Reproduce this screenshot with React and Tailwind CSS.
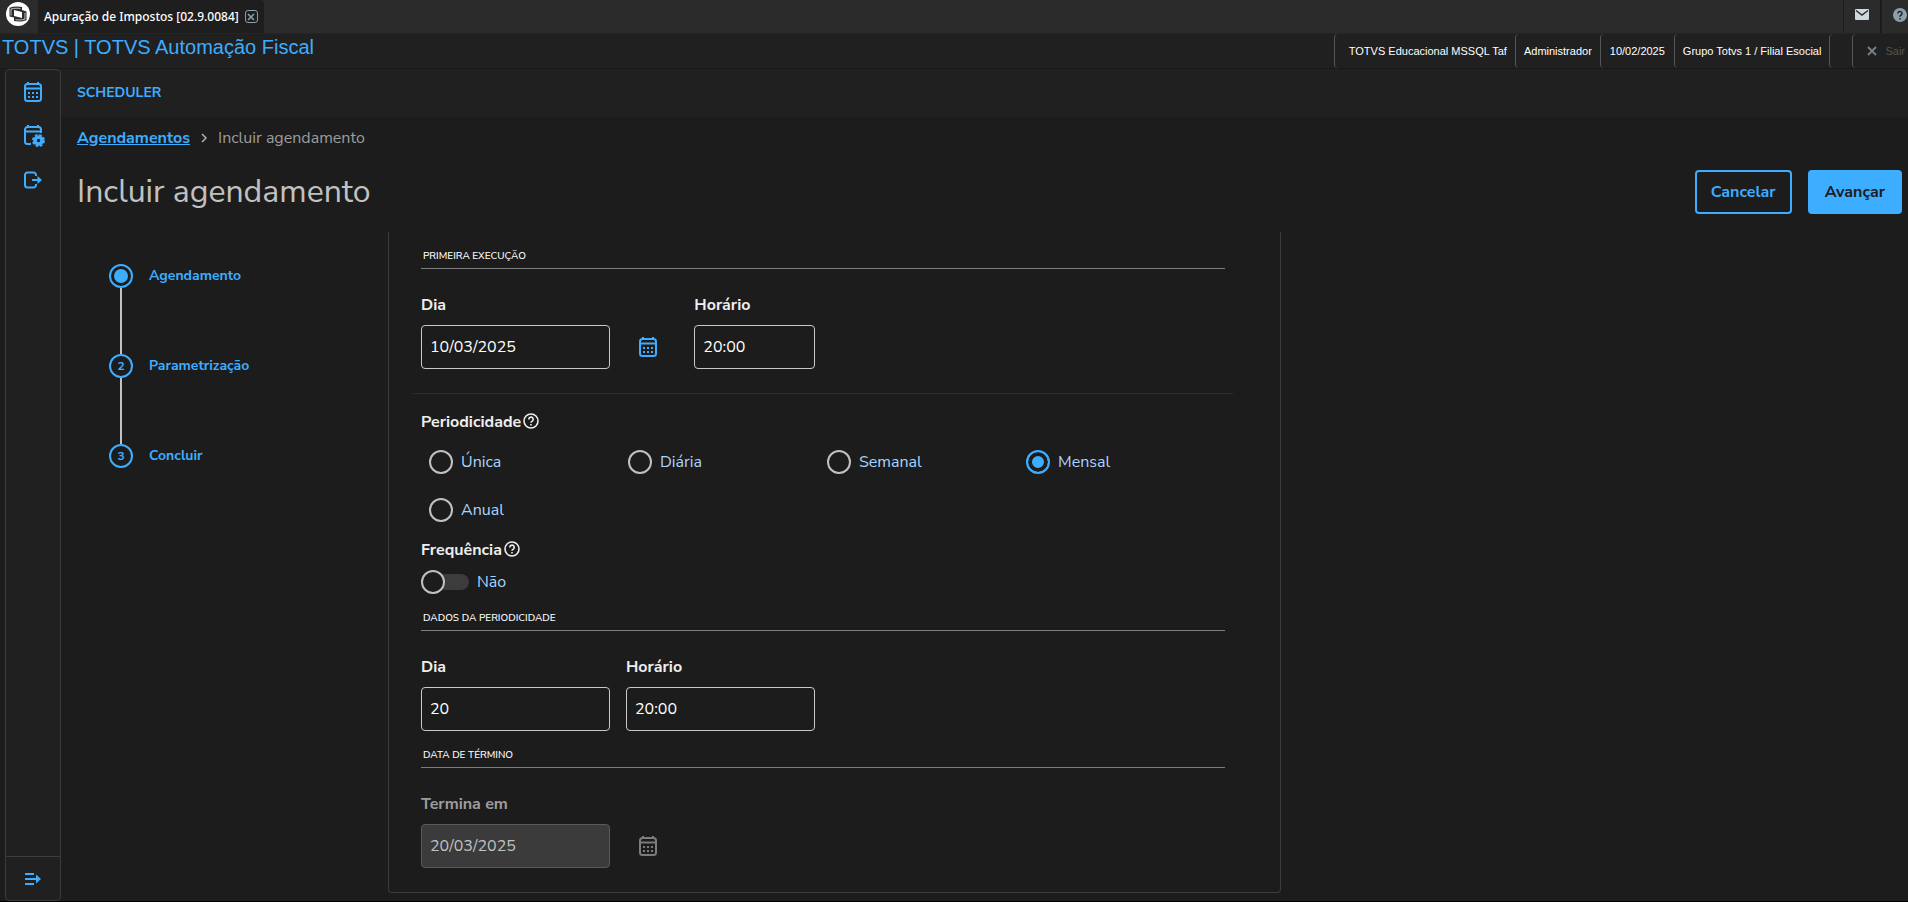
import React, { useState } from 'react';

const CalendarIcon = () => (
  <svg viewBox="0 0 20 22" fill="none" stroke="currentColor" strokeWidth="2" className="w-5 h-[22px]" aria-hidden="true">
    <rect x="2" y="3" width="16" height="17" rx="2.5" />
    <path d="M2 7.5h16M5 1v2M15 1v2" />
    <path d="M5 12h2M9 12h2M13 12h2M5 16h2M9 16h2M13 16h2" />
  </svg>
);

const CalendarGearIcon = () => (
  <svg viewBox="0 0 22 24" fill="none" stroke="currentColor" strokeWidth="2" className="w-[22px] h-6" aria-hidden="true">
    <path d="M8 20H4.500a2.500 2.500 0 0 1-2.500-2.500v-12A2.500 2.500 0 0 1 4.500 3h11A2.500 2.500 0 0 1 18 5.500V9" />
    <path d="M2 7.500h16M5 1v2M15 1v2" />
    <circle cx="15.500" cy="16.500" r="3.500" strokeWidth="3.600" />
    <circle cx="15.500" cy="16.500" r="5.600" strokeWidth="1.800" strokeDasharray="2.700 1.700" />
  </svg>
);

const ExitIcon = () => (
  <svg viewBox="0 0 20 18" fill="none" stroke="currentColor" strokeWidth="2" className="w-5 h-[18px]" aria-hidden="true">
    <path d="M13 5V4a2.500 2.500 0 0 0-2.500-2.500h-6A2.500 2.500 0 0 0 2 4v10a2.500 2.500 0 0 0 2.500 2.500h6A2.500 2.500 0 0 0 13 14v-1" />
    <path d="M9 9h8" />
    <path d="M14.500 5l4.500 4-4.500 4z" fill="currentColor" stroke="none" />
  </svg>
);

const ExpandIcon = () => (
  <svg viewBox="0 0 18 14" fill="none" stroke="currentColor" strokeWidth="2" className="w-[18px] h-[14px]" aria-hidden="true">
    <path d="M1 2h9M1 7h14M1 12h9" />
    <path d="M12 2.500l5 4.500-5 4.500z" fill="currentColor" stroke="none" />
  </svg>
);

const HelpIcon = () => (
  <svg viewBox="0 0 16 16" fill="none" stroke="currentColor" strokeWidth="1.600" className="mb-[3px] size-4" aria-hidden="true">
    <circle cx="8" cy="8" r="7" />
    <path d="M5.800 6.500a2.200 2.200 0 1 1 3.500 1.600c-.8.500-1.300.8-1.300 1.600" />
    <path d="M8 11v1.500" />
  </svg>
);

const Logo = () => (
  <svg viewBox="0 0 24 24" className="size-6" aria-hidden="true">
    <circle cx="12" cy="12" r="12" fill="#fff" />
    <path d="M3.500 5.800c4-1.500 8-1.600 12.500-.8v3l4.500 1.600v8.600c-4 1.500-8.500 1.600-12.500.8v-3.600l-4.500-1z" fill="#2b2b2b" />
    <path d="M8 8l8 2v6l-8-2z" fill="#fff" />
    <path d="M14.500 6.600c-3-.6-6-.5-9.500.4v6.600" fill="none" stroke="#fff" strokeWidth="0.7" />
    <path d="M9.500 17.600c3 .6 6 .5 9.500-.4v-6.400" fill="none" stroke="#fff" strokeWidth="0.7" />
  </svg>
);

const steps = ['Agendamento', 'Parametrização', 'Concluir'];
const periods = ['Única', 'Diária', 'Semanal', 'Mensal', 'Anual'];

const SectionTitle = ({ children }) => (
  <h2 className="border-b border-[#7c7c7c] px-[2px] pb-1 text-[10px] leading-4 font-medium uppercase text-white">{children}</h2>
);

const Field = ({ id, label, value, onChange, disabled, className }) => (
  <div className={className}>
    <label
      htmlFor={id}
      className={disabled ? 'block mb-2 font-bold leading-6 text-[#9c9c9c]' : 'block mb-2 font-bold leading-6 text-[#eeeeee]'}
    >
      {label}
    </label>
    <input
      id={id}
      type="text"
      value={value}
      onChange={onChange}
      disabled={disabled}
      className="block w-full rounded border border-[#c9c9c9] px-2 py-[9px] leading-6 text-white disabled:border-[#5a5a5a] disabled:bg-[#3b3b3b] disabled:text-[#c1c1c1]"
    />
  </div>
);

const App = () => {
  const [form, setForm] = useState({
    startDate: '10/03/2025',
    startTime: '20:00',
    period: 'Mensal',
    frequency: false,
    day: '20',
    time: '20:00',
  });

  const update = (name) => (e) => setForm({ ...form, [name]: e.target.value });

  return (
    <div className="flex min-h-screen flex-col bg-[#1c1c1c] font-['Nunito_Sans','Nunito','Lato',sans-serif] text-base text-[#eeeeee]">
      <div className="flex h-[33px] shrink-0 items-stretch bg-[#2b2b2b]">
        <div className="flex w-[38px] items-start justify-center pt-[2px] pr-[2px]">
          <Logo />
        </div>
        <div className="flex items-center gap-[6px] rounded-tr bg-[#1e1e1e] px-[6px] font-['Noto_Sans',sans-serif] text-xs font-medium text-white">
          <span>Apuração de Impostos [02.9.0084]</span>
          <button aria-label="Fechar" className="flex size-[13px] items-center justify-center rounded-[3px] border border-[#8ba0ab] text-[#8ba0ab]">
            <svg viewBox="0 0 8 8" stroke="currentColor" strokeWidth="1.6" className="size-2"><path d="M1 1l6 6M7 1L1 7" /></svg>
          </button>
        </div>
        <div className="ml-auto flex">
          <button aria-label="Mensagens" className="flex w-[38px] items-center justify-center border-x border-[#1c1c1c] pb-1">
            <svg viewBox="0 0 14 11" className="w-[14px] h-[11px]">
              <rect width="14" height="11" rx="1" fill="#cfd8dc" />
              <path d="M1 1.500l6 4.500 6-4.500" fill="none" stroke="#2b2b2b" strokeWidth="1.400" />
            </svg>
          </button>
          <button aria-label="Ajuda" className="flex w-[27px] items-center justify-end border-l border-[#1c1c1c] pb-1 pr-px">
            <svg viewBox="0 0 14 14" className="size-[14px]">
              <circle cx="7" cy="7" r="7" fill="#8ba0ab" />
              <path d="M5 5.500a2 2 0 1 1 3.200 1.500C7.400 7.500 7 7.800 7 8.700M7 9.900v1.500" fill="none" stroke="#222" strokeWidth="1.500" />
            </svg>
          </button>
        </div>
      </div>

      <header className="flex h-9 shrink-0 items-stretch justify-between border-y border-t-[#252525] border-b-[#191919] bg-[#202020] font-['Liberation_Sans',Arial,sans-serif]">
        <h1 className="pl-[2px] pt-px text-xl leading-6 text-[#3dadff]">TOTVS | TOTVS Automação Fiscal</h1>
        <div className="flex items-stretch text-[11px] text-white">
          <span className="flex items-center rounded-l border-l border-[#555555] pl-[14px] pr-2">TOTVS Educacional MSSQL Taf</span>
          <span className="flex items-center rounded-l border-l border-[#555555] px-2">Administrador</span>
          <span className="flex items-center rounded-l border-l border-[#555555] px-[9px]">10/02/2025</span>
          <span className="flex items-center rounded-l border-l border-[#555555] px-2">Grupo Totvs 1 / Filial Esocial</span>
          <span className="w-[23px] rounded-l border-l border-[#555555]" />
          <button className="flex items-center gap-2 rounded-l border-l border-[#555555] pl-[14px] pr-[3px] text-[#555555]">
            <svg viewBox="0 0 10 10" stroke="#78828a" strokeWidth="1.800" className="size-[10px]"><path d="M1 1l8 8M9 1L1 9" /></svg>
            Sair
          </button>
        </div>
      </header>

      <div className="flex flex-1 border-b border-black">
        <nav className="ml-[5px] flex w-14 shrink-0 flex-col rounded-[4px] border border-[#3c3c3c] bg-[#202020] text-[#3dadff]">
          <a href="#agendamentos" aria-label="Agendamentos" className="flex h-11 items-center justify-center"><CalendarIcon /></a>
          <a href="#rotinas" aria-label="Rotinas" className="flex h-11 items-center justify-center pl-[2px]"><CalendarGearIcon /></a>
          <a href="#sair" aria-label="Sair" className="flex h-11 items-center justify-center"><ExitIcon /></a>
          <button aria-label="Expandir menu" className="mt-auto flex h-11 items-center justify-center border-t border-[#3c3c3c]"><ExpandIcon /></button>
        </nav>

        <div className="min-w-0 flex-1">
          <div className="flex h-12 items-center bg-[#202020] pl-4 text-sm font-bold text-[#3dadff]">SCHEDULER</div>
          <main className="pl-4 pr-[6px]">
            <nav className="flex items-center gap-[10px] pt-[9px] leading-6">
              <a href="#agendamentos" className="font-bold text-[#3dadff] underline">Agendamentos</a>
              <svg viewBox="0 0 8 10" fill="none" stroke="#b0b0b0" strokeWidth="1.500" className="w-2 h-[10px]"><path d="M2 1l4 4-4 4" /></svg>
              <span className="text-[#9c9c9c]">Incluir agendamento</span>
            </nav>
            <div className="flex items-center justify-between pt-5">
              <h1 className="text-[32px] leading-11 text-[#c1c1c1]">Incluir agendamento</h1>
              <div className="flex gap-4 font-bold">
                <button className="rounded border-2 border-[#3dadff] px-[14px] py-2 leading-6 text-[#3dadff]">Cancelar</button>
                <button className="rounded bg-[#3dadff] px-[17px] py-[10px] leading-6 text-[#1c1c1c]">Avançar</button>
              </div>
            </div>

            <div className="flex pt-[18px]">
              <ol className="w-[311px] shrink-0 pl-8 pt-8 text-sm font-bold text-[#3dadff]">
                {steps.map((step, i) => (
                  <li key={step} className="flex gap-4">
                    <div className="flex flex-col items-center">
                      <span className="flex size-6 items-center justify-center rounded-full border-2 border-[#3dadff] text-xs">
                        {i === 0 ? <span className="size-[14px] rounded-full bg-[#3dadff]" /> : i + 1}
                      </span>
                      {i < steps.length - 1 && <span className="h-[66px] w-[2px] bg-[#c1c1c1]" />}
                    </div>
                    <span className="leading-6">{step}</span>
                  </li>
                ))}
              </ol>

              <form className="w-full max-w-[893px] rounded-b border border-t-0 border-[#3c3c3c] pt-4 pr-[55px] pb-6 pl-8">
                <SectionTitle>Primeira execução</SectionTitle>
                <div className="grid grid-cols-12 items-end gap-x-4 pt-6">
                  <Field id="startDate" label="Dia" value={form.startDate} onChange={update('startDate')} className="col-span-3" />
                  <button type="button" aria-label="Abrir calendário" className="flex size-11 items-center justify-center text-[#3dadff]">
                    <CalendarIcon />
                  </button>
                  <Field id="startTime" label="Horário" value={form.startTime} onChange={update('startTime')} className="col-span-2" />
                </div>

                <hr className="-mx-2 mt-6 border-[#2d2d2d]" />

                <fieldset className="mt-4">
                  <legend className="flex items-center gap-[2px] font-bold leading-6">
                    Periodicidade
                    <HelpIcon />
                  </legend>
                  <div className="grid grid-cols-4 gap-y-6 pl-2 pt-4">
                    {periods.map((period) => (
                      <label key={period} className="flex items-center gap-2 leading-6 text-[#a8d5ff]">
                        <input
                          type="radio"
                          name="period"
                          value={period}
                          checked={form.period === period}
                          onChange={update('period')}
                          className="size-6 appearance-none rounded-full border-2 border-[#c1c1c1] checked:border-[#3dadff] checked:bg-[#3dadff] checked:shadow-[inset_0_0_0_4px_#1c1c1c]"
                        />
                        {period}
                      </label>
                    ))}
                  </div>
                </fieldset>

                <div className="flex items-center gap-[2px] pt-4 font-bold leading-6">
                  Frequência
                  <HelpIcon />
                </div>
                <label className="mt-2 flex w-fit items-center gap-2 leading-6 text-[#a8d5ff]">
                  <input
                    type="checkbox"
                    role="switch"
                    checked={form.frequency}
                    onChange={(e) => setForm({ ...form, frequency: e.target.checked })}
                    className="peer sr-only"
                  />
                  <span className="flex w-12 items-center peer-checked:flex-row-reverse">
                    <span className="z-10 size-6 rounded-full border-2 border-[#c1c1c1] bg-[#1c1c1c]" />
                    <span className="-ml-2 h-4 w-8 rounded-full bg-[#3c3c3c]" />
                  </span>
                  {form.frequency ? 'Sim' : 'Não'}
                </label>

                <div className="pt-4">
                  <SectionTitle>Dados da periodicidade</SectionTitle>
                </div>
                <div className="grid grid-cols-12 gap-x-4 pt-6">
                  <Field id="day" label="Dia" value={form.day} onChange={update('day')} className="col-span-3" />
                  <Field id="time" label="Horário" value={form.time} onChange={update('time')} className="col-span-3" />
                </div>

                <div className="pt-4">
                  <SectionTitle>Data de término</SectionTitle>
                </div>
                <div className="grid grid-cols-12 items-end gap-x-4 pt-6">
                  <Field id="endDate" label="Termina em" value="20/03/2025" disabled className="col-span-3" />
                  <button type="button" disabled aria-label="Abrir calendário" className="flex size-11 items-center justify-center text-[#7c7c7c]">
                    <CalendarIcon />
                  </button>
                </div>
              </form>
            </div>
          </main>
        </div>
      </div>
    </div>
  );
};

export default App;
